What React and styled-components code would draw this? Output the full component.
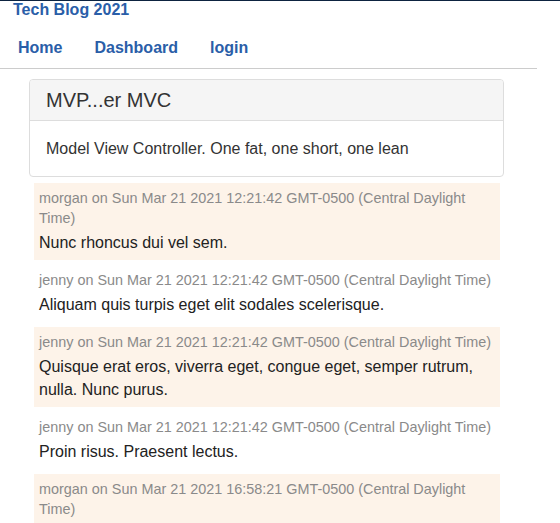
import styled, { createGlobalStyle } from "styled-components";

const GlobalStyle = createGlobalStyle`
  html, body {
    margin: 0;
    padding: 0;
    background: #fff;
    font-family: "Liberation Sans", Helvetica, Arial, sans-serif;
    color: #333;
    overflow: hidden;
  }
`;

const Page = styled.div`
  border-top: 1px solid #0d2340;
  min-height: 522px;
`;

const SiteTitle = styled.h1`
  margin: 0;
  padding-left: 13px;
  font-size: 16px;
  line-height: 18px;
  font-weight: 700;
  color: #2a5ea8;
`;

const Nav = styled.nav`
  display: flex;
  margin-top: 9px;
  padding-left: 2px;
  width: 535px;
  border-bottom: 1px solid #ccc;
`;

const NavLink = styled.a`
  padding: 10px 16px;
  font-size: 16px;
  line-height: 20px;
  font-weight: 700;
  color: #2a5ea8;
  text-decoration: none;
`;

const Main = styled.main`
  padding: 10px 0 0 29px;
  width: 475px;
`;

const Card = styled.section`
  border: 1px solid #ddd;
  border-radius: 4px;
  overflow: hidden;
`;

const CardHeader = styled.div`
  background: #f5f5f5;
  border-bottom: 1px solid #ddd;
  padding: 9px 16px;
  font-size: 20px;
  line-height: 22px;
  color: #333;
`;

const CardBody = styled.div`
  padding: 16px;
  font-size: 16px;
  line-height: 23px;
  color: #333;
`;

const CommentList = styled.div`
  display: flex;
  flex-direction: column;
  gap: 5px;
  margin: 6px 4px 0 5px;
`;

const Comment = styled.article`
  padding: 5px 5px 6px;
  background: ${(p) => (p.$shaded ? "#fdf3e9" : "transparent")};
`;

const Meta = styled.div`
  margin-bottom: 3px;
  font-size: 14.4px;
  line-height: 20px;
  color: #8a8a8a;
`;

const Text = styled.div`
  font-size: 16px;
  line-height: 23px;
  color: #222;
`;

// last one runs off the bottom of the frame, so its body isn't shown
const comments = [
  {
    user: "morgan",
    date: "Sun Mar 21 2021 12:21:42 GMT-0500 (Central Daylight Time)",
    text: "Nunc rhoncus dui vel sem.",
  },
  {
    user: "jenny",
    date: "Sun Mar 21 2021 12:21:42 GMT-0500 (Central Daylight Time)",
    text: "Aliquam quis turpis eget elit sodales scelerisque.",
  },
  {
    user: "jenny",
    date: "Sun Mar 21 2021 12:21:42 GMT-0500 (Central Daylight Time)",
    text: "Quisque erat eros, viverra eget, congue eget, semper rutrum, nulla. Nunc purus.",
  },
  {
    user: "jenny",
    date: "Sun Mar 21 2021 12:21:42 GMT-0500 (Central Daylight Time)",
    text: "Proin risus. Praesent lectus.",
  },
  {
    user: "morgan",
    date: "Sun Mar 21 2021 16:58:21 GMT-0500 (Central Daylight Time)",
    text: "",
  },
];

const App = () => {
  return (
    <Page>
      <GlobalStyle />
      <SiteTitle>Tech Blog 2021</SiteTitle>
      <Nav>
        <NavLink href="#">Home</NavLink>
        <NavLink href="#">Dashboard</NavLink>
        <NavLink href="#">login</NavLink>
      </Nav>
      <Main>
        <Card>
          <CardHeader>MVP...er MVC</CardHeader>
          <CardBody>Model View Controller. One fat, one short, one lean</CardBody>
        </Card>
        <CommentList>
          {comments.map((c, i) => (
            <Comment key={i} $shaded={i % 2 === 0}>
              <Meta>{`${c.user} on ${c.date}`}</Meta>
              {c.text && <Text>{c.text}</Text>}
            </Comment>
          ))}
        </CommentList>
      </Main>
    </Page>
  );
};

export default App;
